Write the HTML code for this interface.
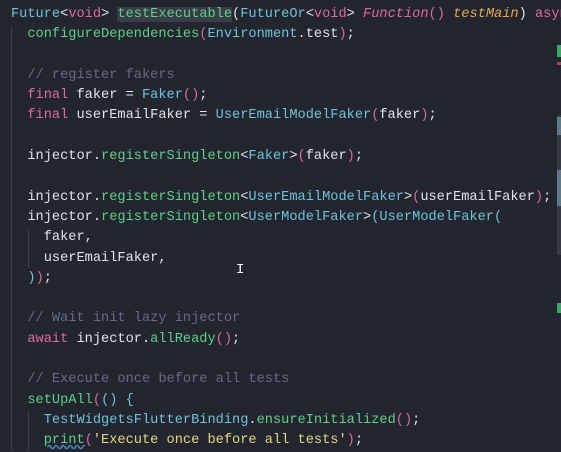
<!DOCTYPE html>
<html><head><style>
html,body{margin:0;padding:0;background:#23262f;width:561px;height:451px;overflow:hidden}
pre{margin:0;position:absolute;left:11px;top:5px;font-family:"Liberation Mono",monospace;font-size:13.65px;line-height:20.3px;color:#dfe3ea;white-space:pre}
.k{color:#e0699b}.t{color:#6cc3d9}.f{color:#5ed087}.c{color:#626b88}.s{color:#e3d77c}.p{color:#e8a54e;font-style:italic}.i{color:#e0699b;font-style:italic}
.b{color:#d86a9c}
.sel{background:#383d47}
.g{position:absolute;left:11px;top:26px;width:1px;height:425px;background:#3a3e48}
.g2{position:absolute;left:28px;top:228px;width:1px;height:40px;background:#3a3e48}
.g3{position:absolute;left:28px;top:411px;width:1px;height:40px;background:#3a3e48}
.sb{position:absolute;left:557px;width:4px}
</style></head><body>
<div class="g"></div><div class="g2"></div><div class="g3"></div>
<div class="sb" style="top:115px;height:140px;background:#353a43"></div>
<div class="sb" style="top:117px;height:18px;background:#5f7a86"></div>
<div class="sb" style="top:170px;height:36px;background:#5f7a86"></div>
<div class="sb" style="top:45px;height:12px;background:#3fa864"></div>
<div class="sb" style="top:62px;height:3px;background:#a04a4a"></div>
<div class="sb" style="top:303px;height:10px;background:#3fa864"></div>
<pre><span class="t">Future</span>&lt;<span class="k">void</span>&gt; <span class="f sel">testExecutable</span>(<span class="t">FutureOr</span>&lt;<span class="k">void</span>&gt; <span class="i">Function</span><span class="b">()</span> <span class="p">testMain</span>) <span class="k">async</span>
  <span class="f">configureDependencies</span><span class="b">(</span><span class="t">Environment</span>.test<span class="b">)</span>;

  <span class="c">// register fakers</span>
  <span class="k">final</span> faker = <span class="t">Faker</span><span class="b">()</span>;
  <span class="k">final</span> userEmailFaker = <span class="t">UserEmailModelFaker</span><span class="b">(</span>faker<span class="b">)</span>;

  injector.<span class="f">registerSingleton</span>&lt;<span class="t">Faker</span>&gt;<span class="b">(</span>faker<span class="b">)</span>;

  injector.<span class="f">registerSingleton</span>&lt;<span class="t">UserEmailModelFaker</span>&gt;<span class="b">(</span>userEmailFaker<span class="b">)</span>;
  injector.<span class="f">registerSingleton</span>&lt;<span class="t">UserModelFaker</span>&gt;<span class="t">(UserModelFaker(</span>
    faker,
    userEmailFaker,
  <span class="t">)</span><span class="b">)</span>;

  <span class="c">// Wait init lazy injector</span>
  <span class="k">await</span> injector.<span class="f">allReady</span><span class="b">()</span>;

  <span class="c">// Execute once before all tests</span>
  <span class="f">setUpAll</span><span class="b">(</span><span class="t">()</span> <span class="t">{</span>
    <span class="t">TestWidgetsFlutterBinding</span>.<span class="f">ensureInitialized</span><span class="b">()</span>;
    <span class="f" style="text-decoration:underline wavy #4a8fd0">print</span><span class="b">(</span><span class="s">'Execute once before all tests'</span><span class="b">)</span>;</pre>
<div style="position:absolute;left:236px;top:262px;font:14px 'Liberation Mono',monospace;color:#fff">I</div>
</body></html>
